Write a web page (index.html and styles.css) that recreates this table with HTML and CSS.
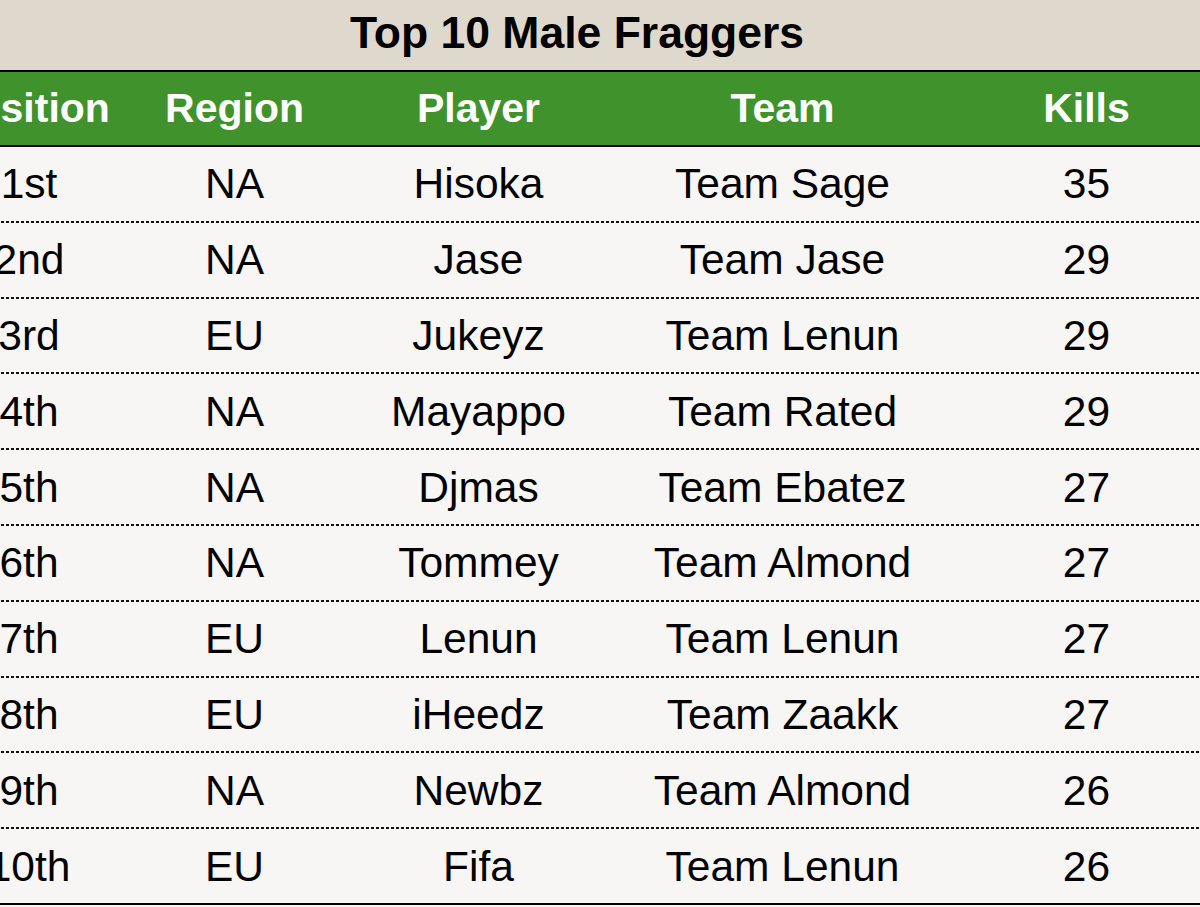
FILE: index.html
```html
<!DOCTYPE html>
<html>
<head>
<meta charset="utf-8">
<link rel="stylesheet" href="styles.css">
</head>
<body>
<div class="sheet">
  <div class="title">Top 10 Male Fraggers</div>
  <div class="row head">
    <div>Position</div><div>Region</div><div>Player</div><div>Team</div><div>Kills</div>
  </div>
  <div class="row"><div>1st</div><div>NA</div><div>Hisoka</div><div>Team Sage</div><div>35</div></div>
  <div class="row"><div>2nd</div><div>NA</div><div>Jase</div><div>Team Jase</div><div>29</div></div>
  <div class="row"><div>3rd</div><div>EU</div><div>Jukeyz</div><div>Team Lenun</div><div>29</div></div>
  <div class="row"><div>4th</div><div>NA</div><div>Mayappo</div><div>Team Rated</div><div>29</div></div>
  <div class="row"><div>5th</div><div>NA</div><div>Djmas</div><div>Team Ebatez</div><div>27</div></div>
  <div class="row"><div>6th</div><div>NA</div><div>Tommey</div><div>Team Almond</div><div>27</div></div>
  <div class="row"><div>7th</div><div>EU</div><div>Lenun</div><div>Team Lenun</div><div>27</div></div>
  <div class="row"><div>8th</div><div>EU</div><div>iHeedz</div><div>Team Zaakk</div><div>27</div></div>
  <div class="row"><div>9th</div><div>NA</div><div>Newbz</div><div>Team Almond</div><div>26</div></div>
  <div class="row last"><div>10th</div><div>EU</div><div>Fifa</div><div>Team Lenun</div><div>26</div></div>
</div>
</body>
</html>
```

FILE: styles.css
```css
html, body {
  margin: 0;
  padding: 0;
  background: #f7f6f4;
  overflow: hidden;
}
.sheet {
  width: 1302px;
  margin-left: -74px;
  font-family: "Liberation Sans", Arial, sans-serif;
  color: #000;
}
.title {
  height: 70px;
  background: #dfd8cd;
  display: flex;
  align-items: center;
  justify-content: center;
  font-weight: bold;
  font-size: 44.5px;
  padding-bottom: 4px;
  box-sizing: border-box;
}
.row {
  display: grid;
  grid-template-columns: 206px 205px 283px 325px 283px;
  height: 75.8px;
  box-sizing: border-box;
  padding-bottom: 2px;
  background-color: #f7f6f4;
  background-image: repeating-linear-gradient(to right, #111 0 3px, transparent 3px 5px);
  background-size: 100% 2px;
  background-position: left bottom;
  background-repeat: no-repeat;
  font-size: 42.5px;
}
.row > div {
  display: flex;
  align-items: center;
  justify-content: center;
  padding-top: 1px;
}
.row.head {
  height: 77px;
  padding-bottom: 0;
  background: #40922c;
  color: #fff;
  font-weight: bold;
  font-size: 41px;
  border-top: 2px solid #000;
  border-bottom: 2px solid #000;
}
.row.head > div {
  padding-top: 0;
}
.row.last {
  padding-bottom: 0;
  background-image: none;
  border-bottom: 2px solid #000;
}
```
